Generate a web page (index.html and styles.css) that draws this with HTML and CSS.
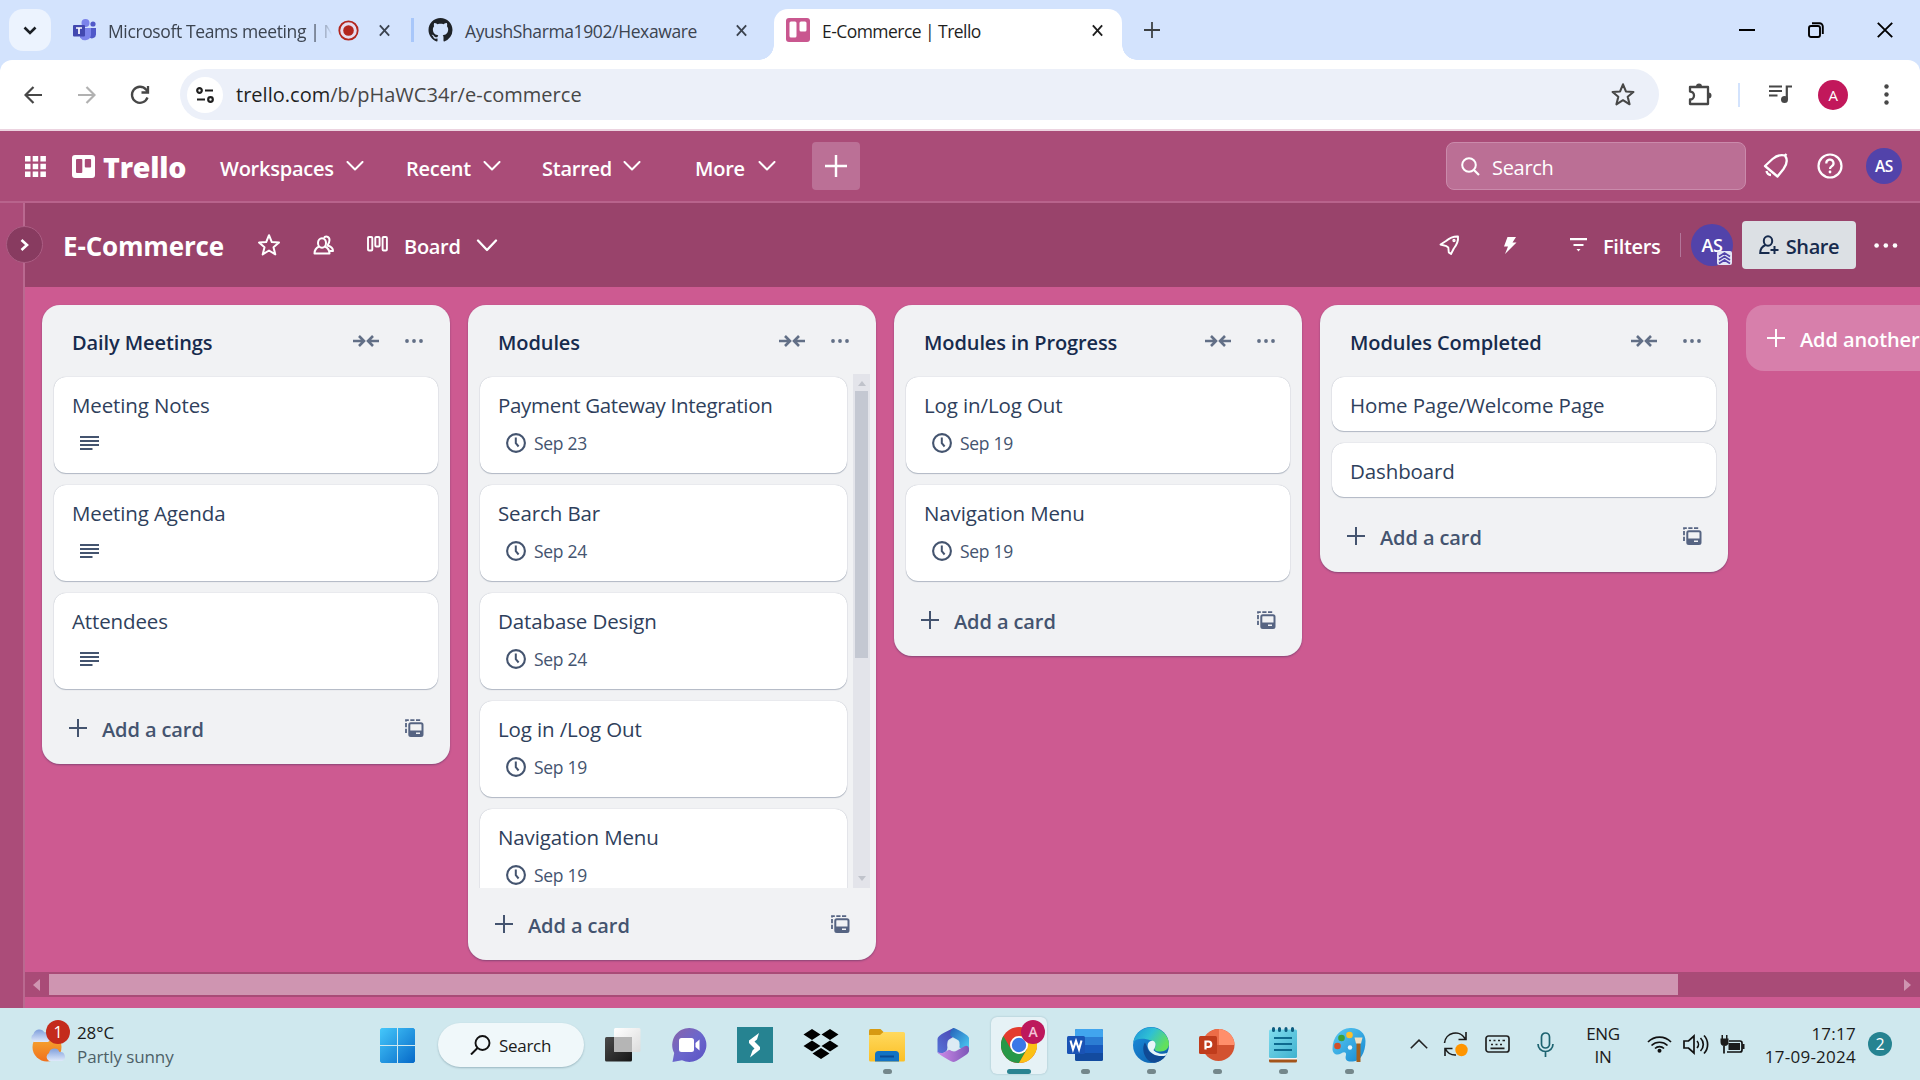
FILE: index.html
```html
<!DOCTYPE html>
<html lang="en">
<head>
<meta charset="utf-8">
<title>E-Commerce | Trello</title>
<link rel="stylesheet" href="styles.css">
</head>
<body>
<svg class="defs" width="0" height="0" aria-hidden="true">
  <defs>
    <linearGradient id="gWin" x1="0" y1="0" x2="1" y2="1"><stop offset="0" stop-color="#45c8fb"/><stop offset="1" stop-color="#0669c8"/></linearGradient>
    <linearGradient id="gSun" x1="0" y1="0" x2="0" y2="1"><stop offset="0" stop-color="#f7b234"/><stop offset="1" stop-color="#f0701c"/></linearGradient>
    <linearGradient id="gCloud" x1="0" y1="0" x2="0" y2="1"><stop offset="0" stop-color="#7f9fdc"/><stop offset="1" stop-color="#dfe9fb"/></linearGradient>
    <linearGradient id="gChat" x1="0" y1="0" x2="1" y2="1"><stop offset="0" stop-color="#8a63a8"/><stop offset=".5" stop-color="#6b67cc"/><stop offset="1" stop-color="#5a52c4"/></linearGradient>
    <linearGradient id="gDark" x1="0" y1="0" x2="1" y2="1"><stop offset="0" stop-color="#4a4a4a"/><stop offset="1" stop-color="#161616"/></linearGradient>
    <linearGradient id="gLight" x1="0" y1="0" x2="1" y2="1"><stop offset="0" stop-color="#ffffff"/><stop offset="1" stop-color="#dcdcdc"/></linearGradient>
    <linearGradient id="gFolder" x1="0" y1="0" x2="0" y2="1"><stop offset="0" stop-color="#ffd95e"/><stop offset="1" stop-color="#fbbf25"/></linearGradient>
    <linearGradient id="gEdgeTop" x1="0" y1="0" x2="1" y2=".5"><stop offset="0" stop-color="#1c93d8"/><stop offset=".5" stop-color="#2fc0d4"/><stop offset="1" stop-color="#62e05c"/></linearGradient>
    <linearGradient id="gEdgeLow" x1="0" y1="0" x2="1" y2="1"><stop offset="0" stop-color="#1b8fe0"/><stop offset="1" stop-color="#0c59a4"/></linearGradient>
    <linearGradient id="gMa" x1="0" y1="1" x2="1" y2="0"><stop offset="0" stop-color="#5576d8"/><stop offset="1" stop-color="#4a3cae"/></linearGradient>
    <linearGradient id="gMb" x1="0" y1="0" x2="1" y2="1"><stop offset="0" stop-color="#2560b8"/><stop offset="1" stop-color="#4fd4f8"/></linearGradient>
    <linearGradient id="gMc" x1="0" y1="0" x2="1" y2="0"><stop offset="0" stop-color="#d08be8"/><stop offset="1" stop-color="#7d57b8"/></linearGradient>
    <linearGradient id="gPaint" x1="0" y1="0" x2="1" y2="1"><stop offset="0" stop-color="#5ccbf2"/><stop offset="1" stop-color="#1488d2"/></linearGradient>
    <linearGradient id="gNote" x1="0" y1="0" x2="1" y2="1"><stop offset="0" stop-color="#7fdcee"/><stop offset="1" stop-color="#3fb2cf"/></linearGradient>
  </defs>
  <symbol id="x" viewBox="0 0 12 14"><path d="M1 1.500 11 12.500M11 1.500 1 12.500" fill="none" stroke="currentColor" stroke-width="2"/></symbol>
  <symbol id="chev" viewBox="0 0 18 10"><path d="M1.500 1 9 8.500 16.500 1" fill="none" stroke="currentColor" stroke-width="2" stroke-linecap="round" stroke-linejoin="round"/></symbol>
  <symbol id="plus" viewBox="0 0 18 18"><path d="M9 0V18M0 9H18" fill="none" stroke="currentColor" stroke-width="2"/></symbol>
  <symbol id="star" viewBox="0 0 24 24"><path d="M12 2.200 14.800 9.100 22 9.600 16.500 14.200 18.300 21.400 12 17.500 5.700 21.400 7.500 14.200 2 9.600 9.200 9.100Z" fill="none" stroke="currentColor" stroke-width="2" stroke-linejoin="round"/></symbol>
  <symbol id="collapse" viewBox="0 0 26 12"><path d="M0 6H10M6 1 11 6 6 11M26 6H16M20 1 15 6 20 11" fill="none" stroke="currentColor" stroke-width="2.600"/></symbol>
  <symbol id="dots" viewBox="0 0 18 4"><circle cx="2" cy="2" r="1.900"/><circle cx="9" cy="2" r="1.900"/><circle cx="16" cy="2" r="1.900"/></symbol>
  <symbol id="tmpl" viewBox="0 0 19 18"><path d="M1 14V1.200H16.500" fill="none" stroke="currentColor" stroke-width="1.800" stroke-dasharray="4.200 1.500"/><rect x="4.300" y="4.300" width="13.200" height="12.600" rx="1.500" fill="none" stroke="currentColor" stroke-width="2"/><path d="M4 11.500H18V16.500H4Z"/><path d="M11 13.500H15V15H11Z" fill="#f1f2f4"/></symbol>
  <symbol id="clock" viewBox="0 0 20 20"><circle cx="10" cy="10" r="8.900" fill="none" stroke="currentColor" stroke-width="2.100"/><path d="M9.800 4.500V10.200L12.600 13.500" fill="none" stroke="currentColor" stroke-width="2"/></symbol>
  <symbol id="desc" viewBox="0 0 19 14"><path d="M0 1H19M0 5H19M0 9H19M0 13H12.500" fill="none" stroke="currentColor" stroke-width="2"/></symbol>
</svg>

<div class="tabs">
  <button class="tab-search"><svg width="14" height="9" viewBox="0 0 14 9" fill="none"><path d="M1.500 1.500 7 7 12.500 1.500" stroke="#1b1f24" stroke-width="2.600"/></svg></button>
  <div class="tab tab-teams">
    <svg width="24" height="23" viewBox="0 0 24 23"><circle cx="12.500" cy="4" r="4" fill="#7b83eb"/><circle cx="20" cy="5" r="2.600" fill="#5059c9"/><path d="M16 9H23V15.500A4 4 0 0 1 16 18Z" fill="#5059c9"/><path d="M7 9H18V16A6 6 0 0 1 7 18.500Z" fill="#7b83eb"/><rect x="0" y="6" width="12" height="11.500" rx="1" fill="#4248b0"/><path d="M3 9H9M6 9V15" stroke="#fff" stroke-width="1.700"/></svg>
    <span class="tab-title faded">Microsoft Teams meeting | N</span>
    <svg class="rec" width="21" height="21" viewBox="0 0 21 21"><circle cx="10.500" cy="10.500" r="9.200" fill="#e6dcee" stroke="#b3261e" stroke-width="1.800"/><circle cx="10.500" cy="10.500" r="5.300" fill="#b3261e"/></svg>
    <svg class="tab-x" width="13" height="13"><use href="#x"/></svg>
  </div>
  <i class="tab-sep"></i>
  <div class="tab tab-git">
    <svg width="25" height="24" viewBox="0 0 16 16"><path fill="#1f2328" d="M8 0C3.580 0 0 3.580 0 8c0 3.540 2.290 6.530 5.470 7.590.4.070.55-.17.55-.38 0-.19-.01-.82-.01-1.490-2.010.37-2.530-.49-2.690-.94-.09-.23-.48-.94-.82-1.130-.28-.15-.68-.52-.01-.53.63-.01 1.080.58 1.230.82.72 1.210 1.870.87 2.330.66.070-.52.28-.87.51-1.070-1.780-.2-3.640-.89-3.640-3.950 0-.87.31-1.590.82-2.150-.08-.2-.36-1.020.08-2.120 0 0 .67-.21 2.200.82.64-.18 1.320-.27 2-.27s1.360.09 2 .27c1.530-1.040 2.200-.82 2.200-.82.44 1.100.16 1.920.08 2.120.51.56.82 1.270.82 2.150 0 3.070-1.870 3.750-3.650 3.950.29.25.54.73.54 1.480 0 1.070-.01 1.930-.01 2.200 0 .21.15.46.55.38A8.010 8.010 0 0 0 16 8c0-4.420-3.580-8-8-8Z"/></svg>
    <span class="tab-title">AyushSharma1902/Hexaware</span>
    <svg class="tab-x" width="13" height="13"><use href="#x"/></svg>
  </div>
  <div class="tab tab-active">
    <svg width="24" height="24" viewBox="0 0 24 24"><rect width="24" height="24" rx="3" fill="#c9578f"/><rect x="3.500" y="3.500" width="7" height="16" rx="1.500" fill="#fff"/><rect x="13.500" y="3.500" width="7" height="10" rx="1.500" fill="#fff"/></svg>
    <span class="tab-title">E-Commerce | Trello</span>
    <svg class="tab-x" width="13" height="13"><use href="#x"/></svg>
  </div>
  <svg class="new-tab" width="16" height="16"><use href="#plus"/></svg>
  <div class="win">
    <svg width="16" height="16" viewBox="0 0 16 16"><path d="M0 8H16" stroke="#000" stroke-width="2"/></svg>
    <svg width="16" height="16" viewBox="0 0 16 16" fill="none" stroke="#000" stroke-width="1.900"><rect x="1" y="4" width="11" height="11" rx="2"/><path d="M4 1.200H11.500A3.300 3.300 0 0 1 14.800 4.500V12"/></svg>
    <svg width="16" height="16" viewBox="0 0 16 16"><path d="M.8.8 15.200 15.200M15.200.8.8 15.200" stroke="#000" stroke-width="1.900"/></svg>
  </div>
</div>

<div class="toolbar-bg">
<div class="toolbar">
  <svg class="nav-i" width="18" height="18" viewBox="0 0 18 18" fill="none" stroke="#474747" stroke-width="2.200"><path d="M18 9H2M9.500 1 1.500 9 9.500 17"/></svg>
  <svg class="nav-i" width="18" height="18" viewBox="0 0 18 18" fill="none" stroke="#b1b1b1" stroke-width="2.200"><path d="M0 9H16M8.500 1 16.500 9 8.500 17"/></svg>
  <svg class="nav-i reload" width="20" height="20" viewBox="0 0 20 20" fill="none" stroke="#474747" stroke-width="2.300"><path d="M17.500 12.500A8 8 0 1 1 16 4.500L18 7M18 1V7.500H11.500"/></svg>
  <div class="omni">
    <span class="site"><svg width="18" height="16" viewBox="0 0 18 16" fill="none" stroke="#1f1f1f" stroke-width="2.200"><circle cx="3.500" cy="3.500" r="2.300"/><path d="M9 3.500H17M1 12.500H9"/><circle cx="14.500" cy="12.500" r="2.300"/></svg></span>
    <span class="url"><b>trello.com</b>/b/pHaWC34r/e-commerce</span>
    <svg class="bm" width="26" height="25"><use href="#star"/></svg>
  </div>
  <svg class="ext" width="25" height="25" viewBox="0 0 25 25"><path d="M2 5H20V22H2V17.500A4 4 0 0 0 2 9.500Z" fill="none" stroke="#474747" stroke-width="2.300" stroke-linejoin="round"/><path d="M8 4.500A3 3 0 0 1 14 4.500ZM20.500 10.500A3 3 0 0 1 20.500 16.500Z" fill="#474747"/></svg>
  <i class="tb-sep"></i>
  <svg class="media" width="23" height="19" viewBox="0 0 23 19"><path d="M0 1.500H13M0 6H13M0 10.500H8.500M17.800 14V1.500H23" fill="none" stroke="#474747" stroke-width="2.200"/><circle cx="15.500" cy="14.500" r="3.500" fill="#474747"/></svg>
  <span class="profile">A</span>
  <svg class="kebab" width="5" height="21" viewBox="0 0 5 21" fill="#474747"><circle cx="2.500" cy="2.500" r="2.200"/><circle cx="2.500" cy="10.500" r="2.200"/><circle cx="2.500" cy="18.500" r="2.200"/></svg>
</div>
</div>

<header class="top">
  <svg width="21" height="21" viewBox="0 0 21 21" fill="#fff"><path d="M0 0H5.500V5.500H0ZM7.700 0H13.200V5.500H7.700ZM15.400 0H20.900V5.500H15.400ZM0 7.700H5.500V13.200H0ZM7.700 7.700H13.200V13.200H7.700ZM15.400 7.700H20.900V13.200H15.400ZM0 15.400H5.500V20.900H0ZM7.700 15.400H13.200V20.900H7.700ZM15.400 15.400H20.900V20.900H15.400Z"/></svg>
  <svg class="logo" width="23" height="23" viewBox="0 0 23 23"><rect width="23" height="23" rx="3" fill="#fff"/><rect x="4" y="4" width="6.300" height="14" rx="1" fill="#a94b77"/><rect x="12.800" y="4" width="6.300" height="8.500" rx="1" fill="#a94b77"/></svg>
  <span class="brand">Trello</span>
  <nav>
    <a class="n1"><span>Workspaces</span><svg width="18" height="10"><use href="#chev"/></svg></a>
    <a class="n2"><span>Recent</span><svg width="18" height="10"><use href="#chev"/></svg></a>
    <a class="n3"><span>Starred</span><svg width="18" height="10"><use href="#chev"/></svg></a>
    <a class="n4"><span>More</span><svg width="18" height="10"><use href="#chev"/></svg></a>
  </nav>
  <button class="create"><svg width="22" height="22"><use href="#plus"/></svg></button>
  <div class="search"><svg width="19" height="19" viewBox="0 0 19 19"><circle cx="8" cy="8" r="6.800" fill="none" stroke="#fff" stroke-width="2"/><path d="M13 13 18 18" stroke="#fff" stroke-width="2.200"/></svg><span>Search</span></div>
  <svg class="bell" width="26" height="26" viewBox="0 0 26 26" fill="none" stroke="#fff" stroke-width="2.300" stroke-linejoin="round"><path d="M2 13 9.500 6C13.500 2.500 18 1.500 22 2.500 25 7 23.500 12 20.500 16L14.500 23.500Z"/><path d="M3.500 18C4 20.500 5.500 21.800 8 22M21.500 3 23.500 1"/></svg>
  <svg class="help" width="26" height="26" viewBox="0 0 26 26" fill="none" stroke="#fff" stroke-width="2.200"><circle cx="13" cy="13" r="11.500"/><path d="M9.300 10.500A3.600 3.600 0 1 1 14.500 13.400C13.300 14 13 14.500 13 16"/><circle cx="13" cy="19" r="1.400" fill="#fff" stroke="none"/></svg>
  <span class="me">AS</span>
</header>

<div class="main">
  <aside></aside>
  <section class="board">
    <span class="toggle"><svg width="9" height="12" viewBox="0 0 9 12"><path d="M1.500 1 7 6 1.500 11" fill="none" stroke="#fff" stroke-width="2.600"/></svg></span>
    <div class="bhead">
      <h1>E-Commerce</h1>
      <svg class="b-star" width="24" height="24"><use href="#star"/></svg>
      <svg class="b-vis" width="22" height="20" viewBox="0 0 22 20" fill="none" stroke="#fff" stroke-width="2" stroke-linejoin="round"><ellipse cx="9" cy="8" rx="4" ry="4.800"/><path d="M6 11.500C3 13 1.500 15 1.500 18.500H16.500C16.500 15 15 13 12 11.500M11 3C12 .8 16.500 1 16.500 5 16.500 7.500 15.500 9 14.500 10.500 18 11.500 20 13 20 16H17"/></svg>
      <svg class="b-ico" width="21" height="16" viewBox="0 0 21 16" fill="none" stroke="#fff" stroke-width="1.900"><rect x="1" y="1" width="4.300" height="13.500" rx="1"/><rect x="8.300" y="1" width="4.300" height="9.500" rx="1"/><rect x="15.600" y="1" width="4.300" height="13.500" rx="1"/></svg>
      <span class="b-view">Board</span>
      <svg class="b-chev" width="22" height="13" viewBox="0 0 22 13"><path d="M2 1.500 11 11 20 1.500" fill="none" stroke="#fff" stroke-width="2.300" stroke-linecap="round" stroke-linejoin="round"/></svg>
      <svg class="b-rocket" width="21" height="21" viewBox="0 0 21 21" fill="none" stroke="#fff" stroke-width="1.900" stroke-linejoin="round"><path d="M1.500 9.500 7 6C11 2.500 15 1.300 19 1.500 19.500 6 18 9.500 14.800 13.500L12 19 9.800 17.500 9.300 12.500 7.500 11.200Z"/><circle cx="15" cy="5.500" r=".7"/></svg>
      <svg class="b-bolt" width="14" height="17" viewBox="0 0 14 17"><path d="M4.500 0H13L9.500 5.500H13.500L2 17 5 9.500H1Z" fill="#fff"/></svg>
      <svg class="b-filter" width="17" height="14" viewBox="0 0 17 14"><path d="M0 1.200H17M3.500 7H13.500" stroke="#fff" stroke-width="2.200"/><path d="M6.500 11H10.500L8.500 13.500Z" fill="#fff"/></svg>
      <span class="b-filters">Filters</span>
      <i class="b-div"></i>
      <span class="member">AS<svg width="15" height="14" viewBox="0 0 15 14"><rect width="15" height="14" rx="2" fill="#e4e6f5"/><path d="M2 5.500 7.500 2 13 5.500M2 9 7.500 5.500 13 9M2 12.500 7.500 9 13 12.500" fill="none" stroke="#5243aa" stroke-width="1.700"/></svg></span>
      <button class="share"><svg width="20" height="20" viewBox="0 0 20 20" fill="none" stroke="#172b4d" stroke-width="2"><ellipse cx="9" cy="6" rx="4.200" ry="4.700"/><path d="M6.500 10C3 11.500 1.200 13.500 1.200 18H10.500M15.500 11V19M11.500 15H19.500"/></svg><span>Share</span></button>
      <svg class="b-more" width="24" height="5" viewBox="0 0 24 5" fill="#fff"><circle cx="2.600" cy="2.500" r="2.300"/><circle cx="11.800" cy="2.500" r="2.300"/><circle cx="21" cy="2.500" r="2.300"/></svg>
    </div>

    <div class="lists">
      <div class="list">
        <div class="lhead"><h2>Daily Meetings</h2><svg width="26" height="12"><use href="#collapse"/></svg><svg width="18" height="4"><use href="#dots"/></svg></div>
        <div class="cards">
          <div class="card"><p>Meeting Notes</p><div class="badge"><svg width="19" height="14"><use href="#desc"/></svg></div></div>
          <div class="card"><p>Meeting Agenda</p><div class="badge"><svg width="19" height="14"><use href="#desc"/></svg></div></div>
          <div class="card"><p>Attendees</p><div class="badge"><svg width="19" height="14"><use href="#desc"/></svg></div></div>
        </div>
        <div class="lfoot"><svg width="18" height="18"><use href="#plus"/></svg><span>Add a card</span><svg class="t" width="19" height="18"><use href="#tmpl"/></svg></div>
      </div>
      <div class="list">
        <div class="lhead"><h2>Modules</h2><svg width="26" height="12"><use href="#collapse"/></svg><svg width="18" height="4"><use href="#dots"/></svg></div>
        <div class="scroll">
          <div class="cards">
            <div class="card"><p class="long">Payment Gateway Integration</p><div class="badge"><svg width="20" height="20"><use href="#clock"/></svg><span>Sep 23</span></div></div>
            <div class="card"><p>Search Bar</p><div class="badge"><svg width="20" height="20"><use href="#clock"/></svg><span>Sep 24</span></div></div>
            <div class="card"><p>Database Design</p><div class="badge"><svg width="20" height="20"><use href="#clock"/></svg><span>Sep 24</span></div></div>
            <div class="card"><p>Log in /Log Out</p><div class="badge"><svg width="20" height="20"><use href="#clock"/></svg><span>Sep 19</span></div></div>
            <div class="card"><p>Navigation Menu</p><div class="badge"><svg width="20" height="20"><use href="#clock"/></svg><span>Sep 19</span></div></div>
          </div>
          <div class="vbar"><svg width="8" height="5" viewBox="0 0 8 5"><path d="M0 5 4 0 8 5Z"/></svg><i></i><svg width="8" height="5" viewBox="0 0 8 5"><path d="M0 0 4 5 8 0Z"/></svg></div>
        </div>
        <div class="lfoot"><svg width="18" height="18"><use href="#plus"/></svg><span>Add a card</span><svg class="t" width="19" height="18"><use href="#tmpl"/></svg></div>
      </div>
      <div class="list">
        <div class="lhead"><h2>Modules in Progress</h2><svg width="26" height="12"><use href="#collapse"/></svg><svg width="18" height="4"><use href="#dots"/></svg></div>
        <div class="cards">
          <div class="card"><p>Log in/Log Out</p><div class="badge"><svg width="20" height="20"><use href="#clock"/></svg><span>Sep 19</span></div></div>
          <div class="card"><p>Navigation Menu</p><div class="badge"><svg width="20" height="20"><use href="#clock"/></svg><span>Sep 19</span></div></div>
        </div>
        <div class="lfoot"><svg width="18" height="18"><use href="#plus"/></svg><span>Add a card</span><svg class="t" width="19" height="18"><use href="#tmpl"/></svg></div>
      </div>
      <div class="list">
        <div class="lhead"><h2>Modules Completed</h2><svg width="26" height="12"><use href="#collapse"/></svg><svg width="18" height="4"><use href="#dots"/></svg></div>
        <div class="cards">
          <div class="card"><p>Home Page/Welcome Page</p></div>
          <div class="card"><p>Dashboard</p></div>
        </div>
        <div class="lfoot"><svg width="18" height="18"><use href="#plus"/></svg><span>Add a card</span><svg class="t" width="19" height="18"><use href="#tmpl"/></svg></div>
      </div>
      <div class="add-list"><svg width="18" height="18"><use href="#plus"/></svg><span>Add another list</span></div>
    </div>
    <div class="hbar"><svg width="7" height="12" viewBox="0 0 7 12"><path d="M7 0V12L0 6Z"/></svg><i></i><svg width="7" height="12" viewBox="0 0 7 12"><path d="M0 0V12L7 6Z"/></svg></div>
  </section>
</div>

<footer class="taskbar">
  <div class="weather">
    <div class="w-ico">
      <svg width="38" height="36" viewBox="0 0 38 36"><circle cx="18" cy="20" r="14.500" fill="url(#gSun)"/><path d="M5 15A4.500 4.500 0 0 1 4.500 7 6 6 0 0 1 15.500 5.500 5 5 0 0 1 19 15Z" fill="url(#gCloud)"/><path d="M20 34A4.500 4.500 0 0 1 20 26 5.500 5.500 0 0 1 30.500 25 4.700 4.700 0 0 1 33 34Z" fill="url(#gCloud)"/></svg>
      <span class="w-badge">1</span>
    </div>
    <div class="w-text"><span>28°C</span><span class="dim">Partly sunny</span></div>
  </div>
  <div class="start"><svg width="35" height="35" viewBox="0 0 35 35"><path d="M1.500 0H17V17H0V1.500ZM18 0H33.500L35 1.500V17H18ZM0 18H17V35H1.500L0 33.500ZM18 18H35V33.500L33.500 35H18Z" fill="url(#gWin)"/></svg></div>
  <div class="tb-search"><svg width="21" height="20" viewBox="0 0 21 20"><circle cx="12.500" cy="8" r="7" fill="none" stroke="#111" stroke-width="1.900"/><path d="M7.500 13 1 19.500" stroke="#111" stroke-width="2"/></svg><span>Search</span></div>
  <div class="apps">
    <div class="app"><svg width="36" height="36" viewBox="0 0 36 36"><rect y="10" width="27" height="24.500" rx="1.500" fill="url(#gDark)"/><rect x="9" y="1" width="26.500" height="24" rx="1.500" fill="url(#gLight)"/><path d="M9 10H27V25H10Q9 25 9 24Z" fill="#b5b5b5"/></svg></div>
    <div class="app"><svg width="36" height="36" viewBox="0 0 36 36"><path d="M18.500 1A17 17 0 1 1 11 33.300L1.500 35 3.200 26A17 17 0 0 1 18.500 1Z" fill="url(#gChat)"/><rect x="8" y="11" width="15" height="14" rx="2.500" fill="#fff"/><path d="M24.500 16 28.500 12.500V23.500L24.500 20Z" fill="#fff"/></svg></div>
    <div class="app"><svg width="36" height="36" viewBox="0 0 36 36"><rect width="36" height="36" fill="#268391"/><path d="M22 6 12 13.500V16L17.500 21.500 15.500 23.500 13 30.500 23 22.500V20L17.500 14.500 20 12.500Z" fill="#fff"/></svg></div>
    <div class="app"><svg width="36" height="36" viewBox="0 0 36 36"><path d="M9 2 17.500 7.500 9 13 .5 7.500ZM27 2 35.500 7.500 27 13 18.500 7.500ZM9 13.500 17.500 19 9 24.500.5 19ZM27 13.500 35.500 19 27 24.500 18.500 19ZM18 21 26.500 26.500 18 32 9.500 26.500Z" fill="#000"/></svg></div>
    <div class="app run"><svg width="36" height="36" viewBox="0 0 36 36"><path d="M0 3.500Q0 2 1.500 2H11.500L15 5.500V9H0Z" fill="#d79a12"/><path d="M0 8H11L14.500 5H34.500Q36 5 36 6.500V33Q36 34.500 34.500 34.500H1.500Q0 34.500 0 33Z" fill="url(#gFolder)"/><path d="M6 34.500V27.500Q6 24 9.500 24H26.500Q30 24 30 27.500V34.500Z" fill="#1273c4"/><path d="M11 29.500H25" stroke="#0a4a94" stroke-width="2"/></svg></div>
    <div class="app"><svg width="36" height="36" viewBox="0 0 36 36"><path d="M18.500 1 9.500 5.500Q2.500 9 2.500 12V25Q2.500 26.500 5 26.500 12.500 26 12.500 20V15Q12.500 13.500 14 12.500L24 6.500Z" fill="url(#gMa)"/><path d="M18.500 1Q20 1 27 5 34 9 34 11V24Q33 26 30 24L24.500 20.500V15.500Q24.500 13.500 22 12.500L15.500 9Q14 4 18.500 1Z" fill="url(#gMb)"/><path d="M34 21V24Q34 26.500 27 30.500 20 35 18.500 35 17 35 9.500 30.500 3 27 2.500 24.500 5 27 9 25.500L14.500 22.500Q18.500 26 22 23.500L30 19Q33 18 34 21Z" fill="url(#gMc)"/><circle cx="18.300" cy="18" r="6" fill="#dcebf4"/></svg></div>
    <div class="app current"><svg width="36" height="36" viewBox="0 0 36 36"><circle cx="18" cy="18" r="18" fill="#e33b2e"/><path d="M2.400 9A18 18 0 0 0 18 36L25.800 22.500 18 18 10.200 22.500Z" fill="#279847"/><path d="M18 36A18 18 0 0 0 33.600 9H18L25.800 22.500Z" fill="#fbc116"/><circle cx="18" cy="18" r="9" fill="#fff"/><circle cx="18" cy="18" r="7.200" fill="#3b78e7"/></svg><span class="who">A</span></div>
    <div class="app run"><svg width="36" height="36" viewBox="0 0 36 36"><rect x="8" y="2" width="28" height="32" rx="1.500" fill="#134b9f"/><path d="M8 18H36V26H8Z" fill="#185abd"/><path d="M8 10H36V18H8Z" fill="#2b7cd3"/><path d="M9.500 2H34.500Q36 2 36 3.500V10H8V3.500Q8 2 9.500 2Z" fill="#41a5ee"/><rect y="9" width="18" height="18" rx="1.500" fill="#1a53b5"/><path d="M3.500 13.500 6 22.500 9 14 12 22.500 14.500 13.500" fill="none" stroke="#fff" stroke-width="2.100"/></svg></div>
    <div class="app run"><svg width="36" height="36" viewBox="0 0 36 36"><circle cx="18" cy="18" r="18" fill="url(#gEdgeLow)"/><path d="M.3 15.500A18 18 0 0 1 36 17C36 21.500 32.500 24.500 27.500 24.500 24 24.500 21 23.500 21.500 21.500 23.500 19.500 23 14.500 18 13.500 11 11 3 11 .3 15.500Z" fill="url(#gEdgeTop)"/><path d="M12 15.500C8 21 11 34 21 35.800 27 35 31.500 31.500 33.500 27.500 25 30.500 14.500 26.500 14 19.500Z" fill="#104a94"/><path d="M20.500 23C22 25.500 28 28 34 26L33 28.500C26 30.500 17 27.500 15 21 13.500 16 17 13 20.500 14 24 16 22.500 20.500 20.500 23Z" fill="#e8f6fa"/></svg></div>
    <div class="app run"><svg width="36" height="36" viewBox="0 0 36 36"><circle cx="19.500" cy="18" r="16" fill="#d35230"/><path d="M19.500 2A16 16 0 0 1 35.500 18H19.500Z" fill="#ff8f6b"/><path d="M19.500 2A16 16 0 0 0 3.500 18H19.500Z" fill="#ed6c47"/><rect y="9" width="18" height="18" rx="1.500" fill="#c03c1c"/><path d="M6.500 22.500V14.500H9.500A2.700 2.700 0 0 1 9.500 20H6.500" fill="none" stroke="#fff" stroke-width="2.200"/></svg></div>
    <div class="app run"><svg width="36" height="36" viewBox="0 0 36 36"><path d="M4 32H32V34Q32 35.500 30.500 35.500H5.500Q4 35.500 4 34Z" fill="#a3541a"/><rect x="4" y="2.500" width="28" height="28.500" rx="1.500" fill="url(#gNote)"/><path d="M4 31H32V32.500H4Z" fill="#f4f4f4"/><path d="M9 11H27M9 17H27M9 23H27" stroke="#0d6a8f" stroke-width="1.900"/><path d="M8.500 1.500V3.500M14.500 1.500V3.500M21 1.500V3.500M27.500 1.500V3.500" stroke="#0c5c80" stroke-width="3" stroke-linecap="round"/></svg></div>
    <div class="app run"><svg width="36" height="36" viewBox="0 0 36 36"><path d="M19 1C28 .5 34.500 6 34.500 14 34.500 26 29 34.500 22 34.500 16 35 13.500 33 15 28 15.500 25 13 24.500 10 26.500 6 29 1.500 27 1.500 22 1.500 10 9 1.500 19 1Z" fill="url(#gPaint)"/><circle cx="18.500" cy="8" r="3.300" fill="#fbc02d"/><circle cx="10.500" cy="11" r="3.300" fill="#3da137"/><circle cx="6.500" cy="19" r="3.300" fill="#d2502a"/><circle cx="19" cy="20.500" r="2.200" fill="#e8f8fc"/><path d="M25.500 16H29.500V35H25.500Z" fill="#a3601f"/><path d="M23.500 10.500H31.500L30 16.500H25Z" fill="#f0dfc0"/></svg></div>
  </div>
  <div class="tray">
    <svg class="t1" width="18" height="10" viewBox="0 0 18 10" fill="none"><path d="M.8 9.200 9 1.200 17.200 9.200" stroke="#222" stroke-width="1.600"/></svg>
    <svg class="t2" width="26" height="26" viewBox="0 0 26 26" fill="none" stroke="#1a1a1a" stroke-width="1.600"><path d="M1.500 12A11 11 0 0 1 22 7.500M23 1V8.500H15.500M2 25V17.500H9.500M2.500 18A11 11 0 0 0 13 24"/><circle cx="18.500" cy="19" r="6.200" fill="#ff9500" stroke="none"/></svg>
    <svg class="t3" width="25" height="18" viewBox="0 0 25 18" fill="none" stroke="#222" stroke-width="1.700"><rect x="1" y="1" width="23" height="16" rx="2.500"/><path d="M4 5.500H6M8.500 5.500H10.500M13 5.500H15M17.500 5.500H20M6 9.500H8M10.500 9.500H12.500M15 9.500H17M5.500 13.300H19.500"/></svg>
    <svg class="t4" width="17" height="25" viewBox="0 0 17 25" fill="none" stroke="#1d6370" stroke-width="1.700"><rect x="4.500" y="1" width="8" height="15" rx="4"/><path d="M1 12A7.500 7.500 0 0 0 16 12M8.500 19.500V25"/></svg>
    <div class="lang"><span>ENG</span><span>IN</span></div>
    <svg class="t5" width="25" height="18" viewBox="0 0 25 18" fill="none" stroke="#111" stroke-width="1.700"><path d="M1 7A16 16 0 0 1 24 7M4.500 10.500A11.500 11.500 0 0 1 20.500 10.500M8 13.500A6.500 6.500 0 0 1 17 13.500"/><circle cx="12.500" cy="15.800" r="2" fill="#111" stroke="none"/></svg>
    <svg class="t6" width="26" height="21" viewBox="0 0 26 21" fill="none" stroke="#111" stroke-width="1.700"><path d="M1 7H5.500L11 2V19L5.500 14H1ZM14 7A5 5 0 0 1 14 14M17.500 4A9 9 0 0 1 17.500 17M21 1.500A13 13 0 0 1 21 19.500"/></svg>
    <svg class="t7" width="25" height="19" viewBox="0 0 25 19"><path d="M9 6H20Q22 6 22 8V15Q22 17 20 17H7M4 11V18.500" fill="none" stroke="#111" stroke-width="1.700"/><path d="M8.500 8H20V15H8.500ZM22 9H24.500V14H22ZM1.500 0H3V3.500H6V0H7.500V3.500H8.500V7A4 4 0 0 1 .5 7V3.500H1.500Z"/></svg>
    <div class="time"><span>17:17</span><span>17-09-2024</span></div>
    <span class="notif">2</span>
  </div>
</footer>
</body>
</html>
```
FILE: styles.css
```css
* { box-sizing: border-box; }
body {
  margin: 0; width: 1920px; height: 1080px; overflow: hidden;
  display: flex; flex-direction: column;
  font-family: "Open Sans", "Noto Sans", sans-serif; font-size: 20px; letter-spacing: -.3px;
  background: #cd5a91;
}
svg { display: block; flex: none; }
svg:not([fill]) { fill: currentColor; }
button { border: 0; padding: 0; font: inherit; letter-spacing: inherit; display: flex; align-items: center; justify-content: center; }
p, h1, h2 { margin: 0; }
span { white-space: nowrap; }
.defs { position: absolute; }

/* browser tab strip */
.tabs { height: 60px; flex: none; background: #d3e3fd; display: flex; align-items: center; padding-left: 9px; }
.tab-search { width: 42px; height: 42px; border-radius: 14px; background: #ecf3fe; flex: none; }
.tab { display: flex; align-items: center; height: 60px; color: #3c4450; font-size: 17.500px; letter-spacing: -.38px; }
.tab-x { margin-left: auto; }
.tab-title { padding-top: 2px; }
.tab-teams { width: 318px; margin-left: 22px; }
.tab-teams .tab-title { margin-left: 11px; width: 226px; overflow: hidden; }
.faded { -webkit-mask-image: linear-gradient(90deg, #000 205px, transparent 224px); mask-image: linear-gradient(90deg, #000 205px, transparent 224px); }
.rec { margin-left: 4px; }
.tab-sep { width: 3px; height: 24px; background: #a8c7fa; margin-left: 20px; }
.tab-git { width: 320px; margin-left: 14px; }
.tab-git .tab-title { margin-left: 12px; }
.tab-active {
  width: 348px; height: 51px; margin: 9px 0 0 26px; padding: 0 18px 9px 12px; position: relative;
  background: #fff; border-radius: 14px 14px 0 0; color: #1f1f1f;
}
.tab-active .tab-title { margin-left: 12px; letter-spacing: -.55px; }
.tab-active::before, .tab-active::after { content: ""; position: absolute; bottom: 0; width: 15px; height: 15px; }
.tab-active::before { left: -15px; background: radial-gradient(circle at 0 0, transparent 14.500px, #fff 15px); }
.tab-active::after { right: -15px; background: radial-gradient(circle at 100% 0, transparent 14.500px, #fff 15px); }
.new-tab { margin-left: 22px; color: #3c4043; }
.win { display: flex; gap: 53px; margin: 0 27px 0 auto; }

/* browser toolbar */
.toolbar-bg { background: #d3e3fd; flex: none; }
.toolbar { height: 71px; background: #fff; border-bottom: 2px solid #ecd3e0; border-radius: 12px 12px 0 0; display: flex; align-items: center; padding-left: 24px; }
.nav-i { margin-right: 36px; }
.nav-i.reload { margin: 0 30px 0 -2px; }
.omni { width: 1479px; height: 51px; border-radius: 26px; background: #ecf0f9; display: flex; align-items: center; padding-left: 7px; }
.site { width: 36px; height: 36px; border-radius: 50%; background: #fff; display: flex; align-items: center; justify-content: center; }
.url { margin-left: 13px; color: #474747; font-size: 20px; padding-bottom: 1px; letter-spacing: .02px; }
.url b { font-weight: 400; color: #1f1f1f; }
.bm { margin: 0 23px 0 auto; color: #474747; }
.ext { margin-left: 29px; }
.tb-sep { width: 2px; height: 24px; background: #d3e3fd; margin: 0 29px 0 25px; }
.profile { width: 30px; height: 30px; border-radius: 50%; background: #c2185b; color: #fff; font-size: 15px; display: flex; align-items: center; justify-content: center; margin: 0 0 0 26px; }
.kebab { margin-left: 36px; }

/* application header */
.top { height: 72px; flex: none; background: #aa4c78; border-bottom: 2px solid #b8638c; display: flex; align-items: center; padding-left: 25px; color: #fff; }
.logo { margin-left: 26px; }
.brand { font-size: 28.500px; font-weight: 800; width: 125px; padding: 2px 0 0 8px; letter-spacing: -.2px; }
nav { display: flex; font-weight: 600; letter-spacing: -.25px; }
nav a { display: flex; align-items: center; justify-content: space-between; }
nav span { padding-top: 4px; }
.n1 { width: 144px; }
.n2 { width: 95px; margin-left: 42px; }
.n3 { width: 99px; margin-left: 41px; }
.n4 { width: 81px; margin-left: 54px; }
.create { width: 48px; height: 48px; border-radius: 4px; background: #bb7096; color: #fff; margin-left: 36px; }
.search { width: 300px; height: 48px; margin-left: 586px; border: 1px solid #ca8aab; border-radius: 8px; background: #bb6f95; display: flex; align-items: center; padding-left: 14px; font-weight: 500; }
.search span { margin: 2px 0 0 12px; }
.bell { margin-left: 17px; }
.help { margin-left: 28px; }
.me { width: 36px; height: 36px; border-radius: 50%; background: #5243aa; font-size: 15.500px; font-weight: 600; display: flex; align-items: center; justify-content: center; margin-left: 23px; }

/* board */
.main { flex: 1; min-height: 0; display: flex; }
aside { width: 25px; background: #ab4c79; border-right: 2px solid #ba6990; }
.board { flex: 1; min-width: 0; position: relative; display: flex; flex-direction: column; }
.toggle { position: absolute; left: -19px; top: 23px; width: 37px; height: 37px; border-radius: 50%; background: #883b60; border: 1px solid #ab5d83; display: flex; align-items: center; justify-content: center; z-index: 1; }
.bhead { height: 84px; background: #99436b; color: #fff; display: flex; align-items: center; padding-left: 38px; font-weight: 600; flex: none; }
h1 { font-size: 26px; font-weight: 700; width: 194px; letter-spacing: -.15px; padding-top: 2px; }
.b-vis { margin-left: 32px; }
.b-ico { margin-left: 32px; margin-top: -2px; }
.b-view { width: 72px; padding: 2px 0 0 16px; }
.b-chev { margin-left: 16px; }
.b-rocket { margin-left: 941px; }
.b-bolt { margin-left: 43px; }
.b-filter { margin-left: 53px; }
.b-filters { margin-left: 16px; width: 77px; padding-top: 2px; }
.b-div { width: 1px; height: 24px; background: #b3769a; }
.member { width: 42px; height: 42px; border-radius: 50%; background: #5243aa; position: relative; display: flex; align-items: center; justify-content: center; font-size: 18px; margin-left: 10px; }
.member svg { position: absolute; right: 1px; bottom: 1px; }
.share { width: 114px; height: 48px; border-radius: 4px; background: #dce0e4; color: #172b4d; margin-left: 9px; gap: 7px; font-weight: 600; letter-spacing: -.4px; }
.share span { padding-top: 2px; }
.b-more { margin-left: 18px; }

.lists { display: flex; align-items: flex-start; gap: 18px; padding: 18px 0 0 17px; height: 685px; overflow: hidden; flex: none; }
.list { width: 408px; flex: none; background: #f1f2f4; border-radius: 18px; box-shadow: 0 1px 2px rgba(9, 30, 66, .35); }
.lhead { height: 72px; display: flex; align-items: center; padding: 0 27px 0 30px; color: #626f86; }
h2 { font-size: 20px; font-weight: 600; letter-spacing: -.1px; color: #172b4d; margin-right: auto; padding-top: 3px; }
.lhead svg + svg { margin-left: 26px; }
.cards { display: flex; flex-direction: column; gap: 12px; padding: 0 12px; }
.card { background: #fff; border-radius: 12px; padding: 12px 18px; color: #2f3f5c; box-shadow: 0 1px 1px rgba(9, 30, 66, .25), 0 0 1px rgba(9, 30, 66, .31); flex: none; }
.card p { line-height: 28px; padding-top: 2px; height: 30px; font-size: 20.500px; letter-spacing: -.12px; }
.card .long { letter-spacing: -.32px; }
.badge { height: 36px; margin-top: 6px; padding-left: 8px; display: flex; align-items: center; gap: 8px; color: #44546f; font-size: 17.500px; }
.lfoot { height: 72px; display: flex; align-items: center; padding: 0 26px 0 27px; color: #44546f; font-weight: 600; letter-spacing: -.1px; }
.cards + .lfoot { margin-top: 3px; }
.lfoot span { margin-left: 15px; padding-top: 3px; }
.lfoot .t { margin-left: auto; color: #566482; }
.scroll { height: 514px; margin-top: -3px; overflow: hidden; display: flex; }
.scroll .cards { width: 385px; padding: 3px 6px 0 12px; }
.vbar { width: 17px; background: #e3e4ea; display: flex; flex-direction: column; align-items: center; padding: 7px 0; color: #c0c3cb; }
.vbar i { width: 13px; height: 267px; margin: 5px 0 auto; background: #c4c8d2; }
.add-list { width: 408px; height: 66px; flex: none; border-radius: 18px; background: #d77fab; color: #fff; font-weight: 600; letter-spacing: -.1px; display: flex; align-items: center; padding-left: 21px; gap: 15px; }
.add-list span { padding-top: 2px; }
.hbar { height: 25px; flex: none; background: #a94b77; display: flex; align-items: center; padding: 0 9px 0 8px; color: #cf95b1; }
.hbar i { height: 21px; width: 1629px; background: #cf95b1; margin: 0 auto 0 9px; }

/* taskbar */
.taskbar { height: 72px; flex: none; background: #cfe8ee; display: flex; align-items: center; color: #1b1b1b; font-size: 17px; }
.weather { display: flex; width: 380px; padding-left: 29px; }
.w-ico { position: relative; width: 38px; margin: 8px 10px 0 0; }
.w-badge { position: absolute; left: 17px; top: -7px; width: 24px; height: 24px; border-radius: 50%; background: #c42b1c; color: #fff; font-size: 16px; display: flex; align-items: center; justify-content: center; }
.w-text { display: flex; flex-direction: column; line-height: 24px; padding-top: 2px; letter-spacing: -.1px; }
.dim { color: #4d6067; }
.start { padding-top: 2px; }
.tb-search { width: 146px; height: 44px; margin: 2px 0 0 23px; border-radius: 22px; background: #f0f8fa; box-shadow: 0 1px 2px rgba(0, 40, 60, .25); display: flex; align-items: center; padding-left: 32px; gap: 8px; font-size: 17px; }
.apps { display: flex; margin: 2px 0 0 11px; gap: 10px; }
.app { width: 56px; height: 57px; display: flex; align-items: center; justify-content: center; position: relative; border-radius: 6px; }
.run::after, .current::after { content: ""; position: absolute; bottom: 0; width: 9px; height: 5px; border-radius: 3px; background: #74878b; }
.current { background: #e6f2f6; box-shadow: 0 0 2px rgba(0, 50, 70, .25); }
.current::after { width: 24px; background: #2a8391; }
.who { position: absolute; left: 30px; top: 3px; width: 24px; height: 24px; border-radius: 50%; background: #bd185c; color: #f3c3d8; font-size: 14px; font-weight: 600; display: flex; align-items: center; justify-content: center; }
.tray { display: flex; align-items: center; margin-left: 33px; }
.t2 { margin-left: 15px; }
.t3 { margin-left: 16px; }
.t4 { margin-left: 27px; }
.lang, .time { display: flex; flex-direction: column; line-height: 23px; padding-top: 1px; }
.lang { width: 60px; margin-left: 19px; align-items: center; }
.t5 { margin-left: 14px; }
.t6 { margin-left: 11px; }
.t7 { margin-left: 11px; }
.time { width: 111px; align-items: flex-end; letter-spacing: .25px; }
.notif { width: 24px; height: 24px; border-radius: 50%; background: #268391; color: #fff; font-size: 16px; display: flex; align-items: center; justify-content: center; margin-left: 12px; }
```
